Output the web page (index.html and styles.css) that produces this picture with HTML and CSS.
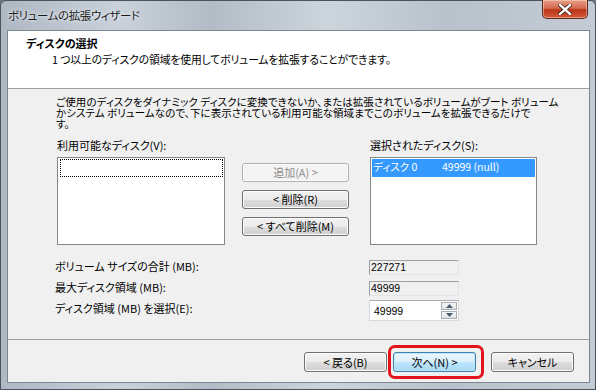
FILE: index.html
```html
<!DOCTYPE html>
<html lang="ja">
<head>
    <meta charset="UTF-8">
    <title>ボリュームの拡張ウィザード</title>
    <link rel="stylesheet" href="styles.css">
</head>
<body>
    <div class="window">
        <div class="titlebar">
            <span class="title">ボリュームの拡張ウィザード</span>
            <span class="close">
                <svg width="14" height="11" viewBox="0 0 14 11">
                    <path d="M2 1 L12 10 M12 1 L2 10" stroke="#3a1a14" stroke-width="4" stroke-linecap="square"/>
                    <path d="M2 1 L12 10 M12 1 L2 10" stroke="#ffffff" stroke-width="2.4" stroke-linecap="square"/>
                </svg>
            </span>
        </div>
        <div class="client">
            <div class="header">
                <div class="heading">ディスクの選択</div>
                <div class="subheading">1 つ以上のディスクの領域を使用してボリュームを拡張することができます。</div>
            </div>
            <div class="body">
                <p class="desc">ご使用のディスクをダイナミック ディスクに変換できないか、または拡張されているボリュームがブート ボリューム<br>かシステム ボリュームなので、下に表示されている利用可能な領域までこのボリュームを拡張できるだけで<br>す。</p>
                <div class="picker">
                    <div class="label">利用可能なディスク(V):</div>
                    <div></div>
                    <div class="label">選択されたディスク(S):</div>
                    <div class="listbox">
                        <div class="item focus"></div>
                    </div>
                    <div class="actions">
                        <button class="btn disabled">追加(A) &gt;</button>
                        <button class="btn">&lt; 削除(R)</button>
                        <button class="btn">&lt; すべて削除(M)</button>
                    </div>
                    <div class="listbox">
                        <div class="item selected"><span class="disk-name">ディスク 0</span><span>49999 (null)</span></div>
                    </div>
                </div>
                <div class="sizes">
                    <div class="size-label">ボリューム サイズの合計 (MB):</div>
                    <div class="readonly">227271</div>
                    <div class="size-label">最大ディスク領域 (MB):</div>
                    <div class="readonly">49999</div>
                    <div class="size-label">ディスク領域 (MB) を選択(E):</div>
                    <div class="spin">
                        <span class="spin-value">49999</span>
                        <span class="spin-buttons">
                            <span class="spin-btn"><svg width="7" height="4" viewBox="0 0 7 4"><path d="M0 4 L3.5 0 L7 4 Z" fill="#4a5b6e"/></svg></span>
                            <span class="spin-btn"><svg width="7" height="4" viewBox="0 0 7 4"><path d="M0 0 L3.5 4 L7 0 Z" fill="#4a5b6e"/></svg></span>
                        </span>
                    </div>
                </div>
            </div>
            <div class="footer">
                <button class="btn wide">&lt; 戻る(B)</button>
                <span class="highlight-wrap">
                    <button class="btn wide default">次へ(N) &gt;</button>
                    <span class="highlight"></span>
                </span>
                <button class="btn wide">キャンセル</button>
            </div>
        </div>
    </div>
</body>
</html>
```

FILE: styles.css
```css
* {
    box-sizing: border-box;
}
body {
    margin: 0;
    width: 596px;
    height: 390px;
    overflow: hidden;
    font-family: "Noto Sans CJK JP", "Noto Sans", sans-serif;
    font-size: 11px;
    font-feature-settings: "palt";
    color: #000;
    background: #6d7782;
}
.window {
    width: 596px;
    height: 390px;
    display: flex;
    flex-direction: column;
    padding: 0 5px 6px 6px;
    border: 1px solid #4b535c;
    border-radius: 6px 6px 0 0;
    background: linear-gradient(90deg, #aeb8c3 0%, #c9d1da 20%, #b3bcc6 35%, #ccd4dc 55%, #b9c2cc 75%, #c3ccd5 100%);
}
.titlebar {
    height: 29px;
    display: flex;
    align-items: flex-start;
    justify-content: space-between;
}
.title {
    margin-top: 8px;
    margin-left: 1px;
    font-size: 11.5px;
    letter-spacing: -0.4px;
    line-height: 13px;
    color: #1a1a1a;
    text-shadow: 0 0 4px #e8eef4, 0 0 2px #e8eef4;
}
.close {
    width: 46px;
    height: 19px;
    margin-right: 2px;
    margin-top: -1px;
    display: flex;
    align-items: center;
    justify-content: center;
    border: 1px solid #5a2a22;
    border-top: none;
    border-radius: 0 0 5px 5px;
    background: linear-gradient(#e8a08a 0%, #d66a50 45%, #bb3518 55%, #d4583a 100%);
    box-shadow: inset 0 0 0 1px rgba(255, 220, 200, 0.5);
}
.client {
    flex: 1;
    display: flex;
    flex-direction: column;
    border: 1px solid #7d8791;
    background: #f0f0f0;
}
.header {
    height: 58px;
    background: #fff;
    border-bottom: 1px solid #a0a0a0;
    padding: 5px 0 0 18px;
}
.heading {
    font-weight: bold;
    font-size: 11px;
    line-height: 14px;
}
.subheading {
    margin-left: 26px;
    margin-top: 3px;
    font-size: 10.8px;
    letter-spacing: -0.1px;
    line-height: 12px;
}
.body {
    height: 251px;
    border-bottom: 1px solid #a0a0a0;
    padding: 7px 0 0 48px;
}
.desc {
    margin: 0;
    font-size: 10.5px;
    line-height: 11px;
    white-space: nowrap;
    letter-spacing: 0.05px;
}
.picker {
    display: grid;
    grid-template-columns: 168px 111px 167px;
    column-gap: 17px;
    margin-top: 10px;
    margin-left: 1px;
}
.label {
    height: 18px;
    line-height: 12px;
}
.listbox {
    height: 88px;
    background: #fff;
    border: 1px solid #828790;
    padding: 1px;
}
.item {
    height: 18px;
    line-height: 16px;
}
.item.focus {
    border: 1px dotted #000;
    margin: 0 0 0 1px;
}
.item.selected {
    background: #3399ff;
    color: #fff;
    padding-left: 1px;
    font-size: 10.5px;
}
.disk-name {
    display: inline-block;
    width: 69px;
}
.actions {
    display: flex;
    flex-direction: column;
    gap: 8px;
    padding-top: 6px;
    margin-right: 4px;
}
.btn {
    height: 19px;
    padding: 0;
    font-family: inherit;
    font-size: 11px;
    font-feature-settings: "palt";
    line-height: 15px;
    color: #000;
    border: 1px solid #707070;
    border-radius: 3px;
    background: linear-gradient(#f2f2f2 0%, #ebebeb 50%, #dddddd 51%, #cfcfcf 100%);
    box-shadow: inset 0 0 0 1px #fcfcfc;
}
.btn.disabled {
    color: #8d8d8d;
    border-color: #adb2b5;
    background: #f4f4f4;
}
.sizes {
    display: grid;
    grid-template-columns: 314px 90px;
    grid-auto-rows: 21px;
    align-items: start;
    margin-top: 15px;
    margin-left: -1px;
}
.size-label {
    line-height: 12px;
}
.readonly {
    height: 15px;
    line-height: 13px;
    border: 1px solid;
    border-color: #a0a0a0 #e3e3e3 #e3e3e3 #a0a0a0;
    background: #f0f0f0;
    padding-left: 1px;
    font-size: 10.5px;
    font-family: "Liberation Sans", sans-serif;
}
.spin {
    height: 21px;
    display: flex;
    align-items: center;
    justify-content: space-between;
    border: 1px solid #d5d8dc;
    border-top-color: #abadb3;
    background: #fff;
    padding: 1px 1px 1px 4px;
    margin-top: -2px;
    font-size: 10.5px;
    font-family: "Liberation Sans", sans-serif;
}
.spin-buttons {
    display: flex;
    flex-direction: column;
    gap: 1px;
}
.spin-btn {
    width: 16px;
    height: 8px;
    display: flex;
    align-items: center;
    justify-content: center;
    border: 1px solid #a8adb3;
    background: linear-gradient(#f5f6f7, #dfe3e8);
}
.footer {
    flex: 1;
    display: flex;
    justify-content: flex-end;
    align-items: flex-start;
    padding: 12px 15px 0 0;
}
.btn.wide {
    width: 83px;
    height: 20px;
}
.highlight-wrap {
    position: relative;
    margin: 0 15px 0 6px;
}
.btn.default {
    border-color: #3c7fb1;
    background: linear-gradient(#eaf6fd 0%, #d9f0fc 50%, #bee6fd 51%, #a7d9f5 100%);
    box-shadow: inset 0 0 0 1px #c4e5f6;
}
.highlight {
    position: absolute;
    left: -5px;
    top: -7px;
    right: -8px;
    bottom: -7px;
    border: 3px solid #e4141f;
    border-radius: 7px;
}
```
